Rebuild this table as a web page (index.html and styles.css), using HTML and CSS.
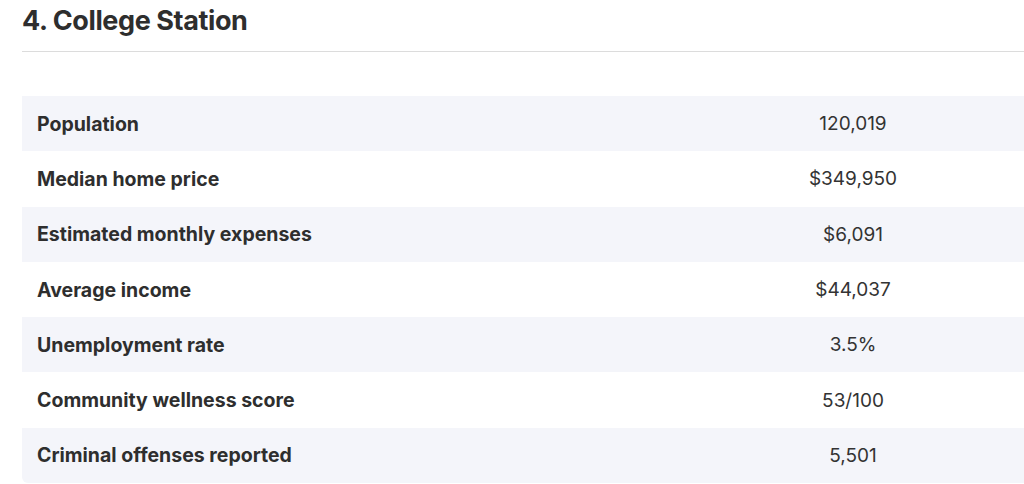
FILE: index.html
```html
<!DOCTYPE html>
<html lang="en">
<head>
<meta charset="utf-8">
<link rel="stylesheet" href="styles.css">
</head>
<body>
<main class="page">
  <h2 class="title">4. College Station</h2>
  <hr class="rule">
  <table class="stats">
    <tbody>
      <tr><th>Population</th><td>120,019</td></tr>
      <tr><th>Median home price</th><td>$349,950</td></tr>
      <tr><th>Estimated monthly expenses</th><td>$6,091</td></tr>
      <tr><th>Average income</th><td>$44,037</td></tr>
      <tr><th>Unemployment rate</th><td>3.5%</td></tr>
      <tr><th>Community wellness score</th><td>53/100</td></tr>
      <tr><th>Criminal offenses reported</th><td>5,501</td></tr>
    </tbody>
  </table>
</main>
</body>
</html>
```

FILE: styles.css
```css
html, body {
  margin: 0;
  padding: 0;
  background: #ffffff;
  overflow: hidden;
}
.page {
  padding: 0 0 0 22px;
  font-family: Inter, "Noto Sans", sans-serif;
  color: #2e2e2e;
}
.title {
  margin: 0;
  padding-top: 4px;
  font-size: 27px;
  line-height: 34px;
  font-weight: 700;
  letter-spacing: -0.4px;
  color: #2e2e2e;
}
.rule {
  margin: 13px 0 0 0;
  border: 0;
  border-top: 1px solid #dcdcdc;
  height: 0;
}
.stats {
  margin-top: 44px;
  width: 100%;
  border-collapse: separate;
  border-spacing: 0;
  table-layout: fixed;
}
.stats tr {
  height: 55.3px;
}
.stats tr:nth-child(odd) th,
.stats tr:nth-child(odd) td {
  background: #f4f5fa;
}
.stats th {
  box-sizing: border-box;
  width: 660px;
  text-align: left;
  padding: 0 0 0 15px;
  font-size: 19.5px;
  font-weight: 700;
  color: #2e2e2e;
}
.stats td {
  text-align: center;
  padding: 0;
  font-size: 19px;
  font-weight: 400;
  color: #333333;
}
.stats tr:last-child th {
  border-bottom-left-radius: 6px;
}
```
